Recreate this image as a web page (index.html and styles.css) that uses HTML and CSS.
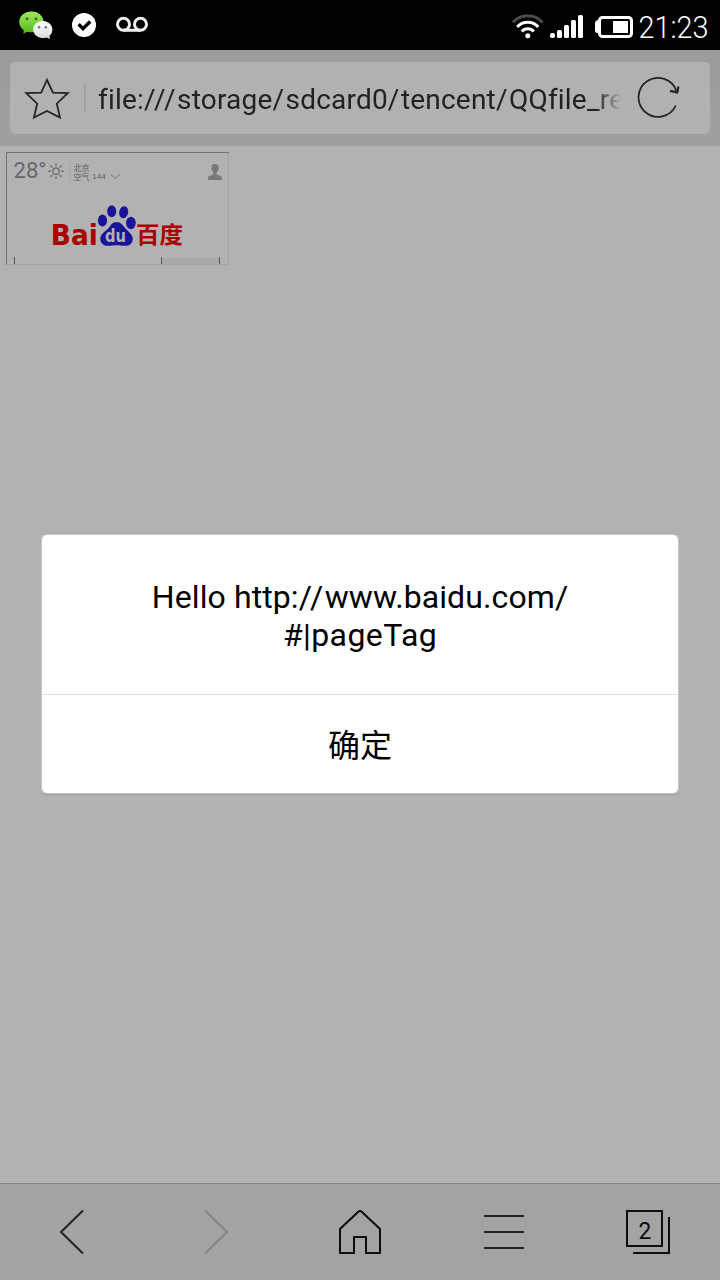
FILE: index.html
```html
<!DOCTYPE html>
<html lang="zh-CN">
<head>
<meta charset="utf-8">
<title>Browser</title>
<link rel="stylesheet" href="styles.css">
</head>
<body>
<div class="screen">
  <header class="status">
    <svg class="status-left" width="160" height="50" viewBox="0 0 160 50">
      <defs>
        <linearGradient id="green" x2="0" y2="1"><stop stop-color="#a0e962"/><stop offset="1" stop-color="#55b817"/></linearGradient>
        <linearGradient id="white" x2="0" y2="1"><stop stop-color="#fff"/><stop offset="1" stop-color="#d5dade"/></linearGradient>
      </defs>
      <path fill="url(#green)" d="M31.500 11.500C24.500 11.500 19.200 16.100 19.200 22c0 3.300 1.700 6.200 4.600 8.200L23.300 33.500l4.200-1.700c1.300.4 2.600.5 4 .5 7 0 12.200-4.500 12.200-10.300s-5.300-10.500-12.200-10.500z"/>
      <path fill="url(#white)" d="M42.700 21c5.500 0 9.700 3.800 9.700 8.500 0 2.800-1.200 4.900-3.100 6.400l.9 3.200-3.600-1.700c-1.200.4-2.500.6-3.900.6-5.400 0-9.600-3.700-9.600-8.500s4.200-8.500 9.600-8.500z"/>
      <circle cx="27" cy="18.700" r="1.500" fill="#39730f"/><circle cx="36" cy="18.700" r="1.500" fill="#39730f"/>
      <circle cx="39" cy="27.200" r="1.200" fill="#6d7175"/><circle cx="45.800" cy="27.200" r="1.200" fill="#6d7175"/>
      <circle cx="84" cy="25" r="12" fill="#fff"/>
      <path d="M79.800 25.500l3.200 3.200 6-6" fill="none" stroke="#000" stroke-width="3.400" stroke-linecap="square"/>
      <g fill="none" stroke="#eee" stroke-width="3"><circle cx="123.500" cy="24.300" r="6"/><circle cx="140.500" cy="24.300" r="6"/><path d="M123.500 30.300h17"/></g>
    </svg>
    <svg class="status-right" width="220" height="50" viewBox="500 0 220 50">
      <g fill="none" stroke="#fff" stroke-width="3">
        <path stroke="#4b4b4b" d="M512.900 22.500a19.500 19.500 0 0 1 29.700 0"/>
        <path d="M517.200 27a14 14 0 0 1 21.100 0"/>
        <path d="M521.800 31.500a8 8 0 0 1 12 0"/>
      </g>
      <circle cx="527.800" cy="35.700" r="2.500" fill="#fff"/>
      <g fill="#fff"><rect x="550" y="33" width="5" height="5" rx="2"/><rect x="557" y="30" width="5" height="8" rx="1.500"/><rect x="564" y="25" width="5" height="13" rx="1.500"/><rect x="571" y="20" width="5" height="18" rx="1.500"/><rect x="578" y="15" width="5" height="23" rx="1.500"/>
      <path d="M599 20h-1.500q-2.500 1-2.500 3v8q0 2 2.500 2H599z"/><rect x="613" y="21" width="15" height="12"/></g>
      <rect x="599.500" y="17.500" width="32" height="19" rx="3" fill="none" stroke="#fff" stroke-width="3"/>
      <text class="clock" x="638.500" y="37.500" textLength="70" lengthAdjust="spacingAndGlyphs">21:23</text>
    </svg>
  </header>

  <div class="toolbar">
    <div class="address">
      <svg class="star" width="46" height="46" viewBox="24 75.500 46 46"><path d="M47 80.500l5.900 12.700 15.100.3-11.200 10.700 3.200 13.800L47 111.500 33.900 118l3.300-13.800L26 93.500l15.200-.3z"/></svg>
      <span class="divider"></span>
      <div class="url">file:<span class="slash">///</span>storage<span class="slash">/</span>sdcard0<span class="slash">/</span>tencent<span class="slash">/</span>QQfile_re</div>
      <svg class="reload" width="44" height="44" viewBox="636 76 44 44"><path d="M676.500 91A19.500 19.500 0 1 0 675.800 105.500"/><path d="M670 90.900l7.200 1.500 1.300-6" stroke-width="2.200"/></svg>
    </div>
  </div>

  <main class="page">
    <div class="frame">
      <svg width="223" height="113" viewBox="6 152 223 113">
        <path d="M6.500 264.500V152.500H229" fill="none" stroke="#737373"/>
        <path d="M7 264.500h221.500V153" fill="none" stroke="#a5a5a5"/>
        <text class="temp" x="13.500" y="178" textLength="33" lengthAdjust="spacingAndGlyphs">28°</text>
        <g fill="none" stroke="#727377" stroke-width="1.400"><circle cx="56" cy="171.200" r="3.200"/><path d="M56 163.200v3M56 176.200v3M48 171.200h3M61 171.200h3M50.300 165.500l2 2M59.700 174.900l2 2M61.700 165.500l-2 2M52.300 174.900l-2 2"/></g>
        <path d="M69.500 163v18" stroke="#a5a5a5"/>
        <text class="city" x="73.500" y="170.500">北京</text>
        <text class="city" x="73.500" y="179.500">空气</text>
        <text class="air" x="92" y="179.300" textLength="14" lengthAdjust="spacingAndGlyphs">144</text>
        <path d="M111 174.500l4.300 4 4.300-4" fill="none" stroke="#6d6e72"/>
        <path fill="#77787c" d="M215 164c-2.400 0-3.800 1.500-3.600 4 .1 2 .9 3.500 2 4.300v2.200l-4.500 1.800c-.7.400-.9 1-.9 3.700h14c0-2.700-.2-3.300-.9-3.700l-4.400-1.800v-2.200c1.100-.8 1.900-2.300 2-4.300.1-2.500-1.300-4-3.700-4z"/>
        <text class="bai" x="50.800" y="245" textLength="47" lengthAdjust="spacingAndGlyphs">Bai</text>
        <g fill="#1a149b">
          <ellipse cx="102.500" cy="220.500" rx="4.600" ry="6"/><ellipse cx="111.700" cy="211.200" rx="4.500" ry="6"/><ellipse cx="123.700" cy="212.200" rx="4.500" ry="6.100" transform="rotate(10 123.700 212.200)"/><ellipse cx="130.900" cy="223" rx="4.800" ry="6.200"/>
          <path d="M116.500 222c-3 0-5.200 1.900-6.900 4.700-2.600 4.200-9.600 6.200-9.300 12.500.3 4.300 3.600 6.800 7.700 6.600 3.500-.1 5.100-.6 8.500-.6s6.300.8 9.300.6c4.100-.2 6.900-2.900 7-6.600.2-5-5.500-8.300-8.800-12.500-2.200-2.800-4.400-4.700-7.500-4.700z"/>
        </g>
        <text class="du" x="105" y="242" textLength="21" lengthAdjust="spacingAndGlyphs">du</text>
        <text class="baidu" x="136" y="243" textLength="47" lengthAdjust="spacingAndGlyphs">百度</text>
        <rect x="162" y="258" width="57" height="6" fill="#aaa"/>
        <path d="M14.500 257v7M161.500 257v7M219.500 257v7" stroke="#555"/>
      </svg>
    </div>
    <div class="dialog">
      <div class="message"><span class="line-one">Hello http:<span class="slash">//</span>www.baidu.com/</span><br><span class="line-two">#|pageTag</span></div>
      <div class="confirm">确定</div>
    </div>
  </main>

  <nav class="bottom">
    <div class="nav-item"><svg width="48" height="48" viewBox="48 1208 48 48"><path d="M83 1210.500L61 1232l22 21.500"/></svg></div>
    <div class="nav-item off"><svg width="48" height="48" viewBox="192 1208 48 48"><path d="M205 1210.500L227 1232l-22 21.500"/></svg></div>
    <div class="nav-item dark"><svg width="48" height="48" viewBox="336 1208 48 48"><path d="M340 1253v-24l18.300-17.300q1.700-1.400 3.400 0L380 1229v24h-14v-16h-12v16z"/></svg></div>
    <div class="nav-item"><svg width="48" height="48" viewBox="480 1208 48 48"><path d="M484 1216h40M484 1232h40M484 1248h40"/></svg></div>
    <div class="nav-item dark"><svg width="48" height="48" viewBox="624 1208 48 48"><path d="M627 1211h35v35h-35zM669 1217v36h-36"/><text class="tabs" x="638.500" y="1239" textLength="12.800" lengthAdjust="spacingAndGlyphs">2</text></svg></div>
  </nav>
</div>
</body>
</html>
```
FILE: styles.css
```css
* { box-sizing: border-box; }
body { margin: 0; background: #b2b2b2; font-family: Roboto, "Noto Sans CJK SC", sans-serif; }
svg { display: block; }
.screen { width: 720px; height: 1280px; display: flex; flex-direction: column; overflow: hidden; }
.status { height: 50px; flex: none; background: #000; display: flex; justify-content: space-between; }
.clock { font-family: Roboto, sans-serif; font-size: 30.5px; font-weight: 300; fill: #fff; }
.toolbar { height: 96px; flex: none; padding: 12px 10px; background: linear-gradient(#9c9c9c, #9f9f9f); }
.address { height: 72px; display: flex; align-items: center; background: #b1b1b1; border-radius: 5px; padding-left: 14px; padding-right: 30px; }
.star { fill: none; stroke: #252525; stroke-width: 1.800; flex: none; }
.divider { width: 2px; height: 30px; margin-left: 14px; background: #a2a2a2; flex: none; }
.url {
  width: 527px; margin-left: 12px; white-space: nowrap; flex: none;
  font-size: 28px; line-height: 40px; letter-spacing: 0.2px; color: #222; padding-top: 3px;
  -webkit-mask-image: linear-gradient(to right, #000 498px, transparent 523px);
  mask-image: linear-gradient(to right, #000 498px, transparent 523px);
}
.slash { letter-spacing: 1.5px; }
.reload { fill: none; stroke: #252525; stroke-width: 1.800; margin-left: auto; flex: none; }
.page { flex: 1; position: relative; padding: 6px; background: #b2b2b2; }
.frame { width: 223px; height: 113px; }
.temp { font-size: 22.5px; fill: #66676c; }
.city { font-family: "Noto Sans CJK SC", sans-serif; font-size: 8px; fill: #5c5d62; }
.air { font-family: "DejaVu Sans", sans-serif; font-size: 7px; fill: #5c5d62; }
.bai { font-family: "DejaVu Sans", sans-serif; font-weight: 700; font-size: 28.5px; fill: #a90000; }
.baidu { font-family: "Noto Sans CJK SC", sans-serif; font-weight: 700; font-size: 22.5px; fill: #a90000; }
.du { font-family: "DejaVu Sans", sans-serif; font-weight: 700; font-size: 17px; fill: #b2b2b2; }
.dialog { position: absolute; left: 42px; top: 389px; width: 636px; height: 258px; background: #fff; border-radius: 5px; box-shadow: 0 0 0 1px #c5c5c5, 0 2px 1px #9c9c9c; }
.message { height: 160px; padding-top: 43px; border-bottom: 1px solid #dedede; text-align: center; font-size: 32px; line-height: 38px; color: #000; }
.line-one { letter-spacing: 0.1px; }
.line-two { letter-spacing: 0.4px; }
.confirm { height: 98px; padding-bottom: 3px; display: flex; align-items: center; justify-content: center; font-family: "Noto Sans CJK SC", sans-serif; font-size: 32px; line-height: 44px; color: #000; }
.bottom { height: 97px; flex: none; display: grid; grid-template-columns: repeat(5, 1fr); border-top: 1px solid #858585; background: #a3a3a3; }
.nav-item { display: flex; align-items: center; justify-content: center; fill: none; stroke: #222; stroke-width: 2; }
.off { stroke: #858585; }
.dark { stroke: #0c0c0c; }
.tabs { font-size: 24px; fill: #0c0c0c; stroke: none; }
```
